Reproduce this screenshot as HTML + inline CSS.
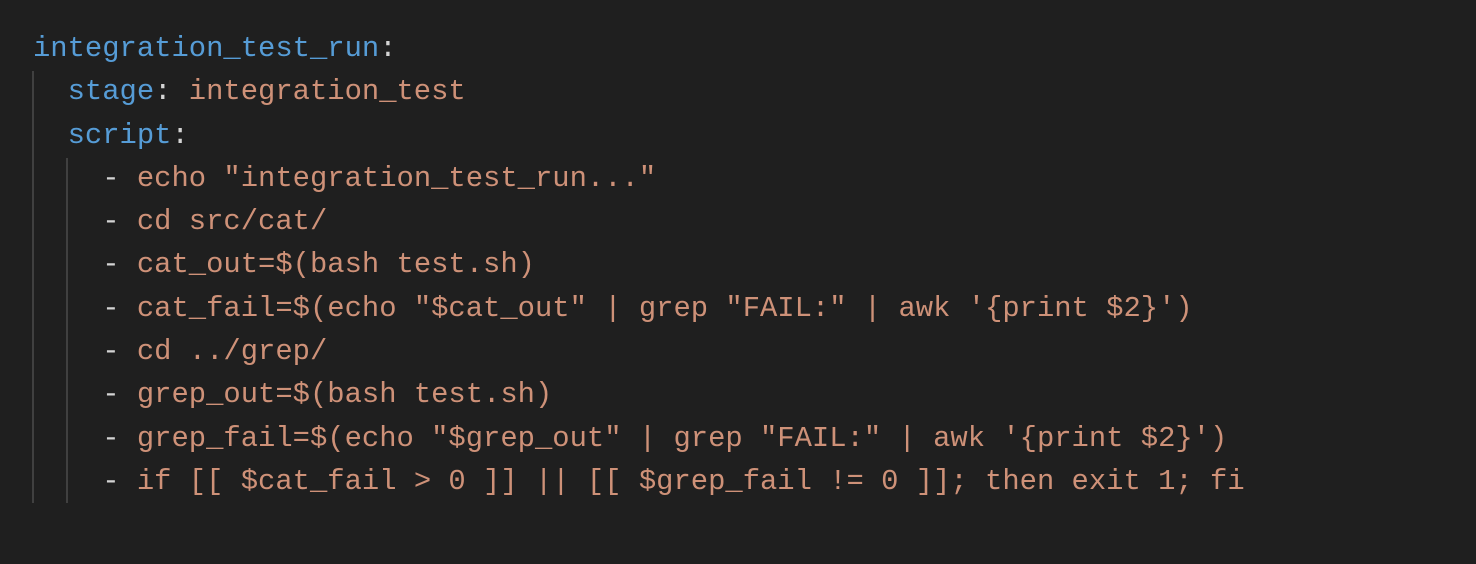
<!DOCTYPE html>
<html><head><style>
html,body{margin:0;padding:0;background:#1f1f1f;width:1476px;height:564px;overflow:hidden}
pre{position:absolute;left:33px;top:27px;margin:0;font-family:"Liberation Mono",monospace;font-size:28.85px;line-height:43.3px;color:#ce9178;white-space:pre}
.k{color:#569cd6}.p{color:#d4d4d4}
.g{position:absolute;width:2px;background:#404040}
</style></head><body>
<div class="g" style="left:32px;top:71px;height:432px"></div>
<div class="g" style="left:66px;top:158px;height:345px"></div>
<pre><span class="k">integration_test_run</span><span class="p">:</span>
  <span class="k">stage</span><span class="p">:</span> integration_test
  <span class="k">script</span><span class="p">:</span>
    <span class="p">-</span> echo "integration_test_run..."
    <span class="p">-</span> cd src/cat/
    <span class="p">-</span> cat_out=$(bash test.sh)
    <span class="p">-</span> cat_fail=$(echo "$cat_out" | grep "FAIL:" | awk '{print $2}')
    <span class="p">-</span> cd ../grep/
    <span class="p">-</span> grep_out=$(bash test.sh)
    <span class="p">-</span> grep_fail=$(echo "$grep_out" | grep "FAIL:" | awk '{print $2}')
    <span class="p">-</span> if [[ $cat_fail &gt; 0 ]] || [[ $grep_fail != 0 ]]; then exit 1; fi</pre>
</body></html>
